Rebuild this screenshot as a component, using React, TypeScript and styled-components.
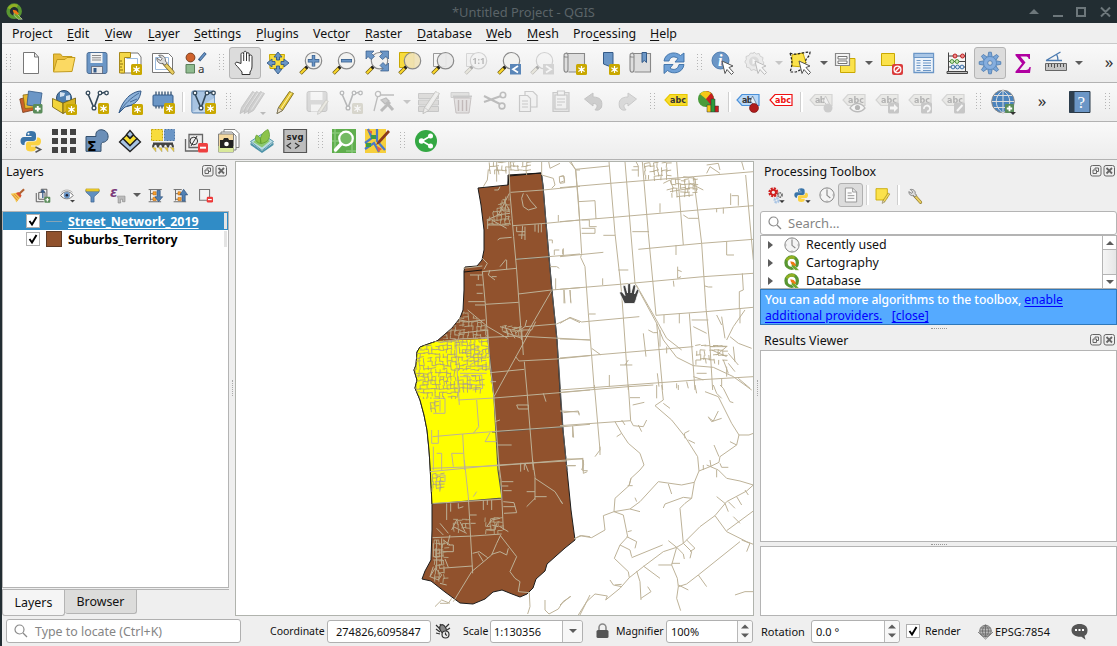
import React from "react";
import styled, { createGlobalStyle, css } from "styled-components";

const Global = createGlobalStyle`
  * { box-sizing: border-box; }
  html, body { margin: 0; padding: 0; overflow: hidden; }
  body { font-family: "Noto Sans", sans-serif; font-size: 12.4px; color: #111; background: #efefef; }
`;

/* ---------- window frame ---------- */
const Window = styled.div`
  width: 1117px; height: 646px; display: flex; flex-direction: column;
  background: #efefef; border-left: 2px solid #222d32;
`;
const TitleBar = styled.header`
  height: 23px; flex: none; background: #222d32; display: flex; align-items: center;
  justify-content: space-between; padding: 0 5px 0 4px;
`;
const TitleText = styled.span`
  color: #5b6468; font-size: 12.9px; margin-left: 429px; margin-right: auto; line-height: 23px; padding-top: 2px;
`;
const WinButtons = styled.svg`width: 86px; height: 22px; display: block;`;
const MenuBar = styled.nav`
  height: 21px; flex: none; display: flex; gap: 15px; padding-left: 10px; align-items: center;
  border-bottom: 1px solid #c9c9c9; line-height: 20px; white-space: nowrap; padding-top: 1px;
`;
const MenuItem = styled.span<{ $w: number }>`
  width: ${p => p.$w}px;
  u { text-underline-offset: 2px; text-decoration-thickness: 1px; }
`;

/* ---------- toolbars ---------- */
const ToolRow = styled.div<{ $h: number }>`
  height: ${p => p.$h}px; flex: none; display: flex; align-items: center;
  background: linear-gradient(#f9f9f9, #ededed); border-bottom: 1px solid #b2b2b2;
`;
const Grip = styled.i<{ $w?: number }>`
  width: ${p => p.$w ?? 16}px; height: 18px; flex: none; display: flex; justify-content: center;
  &::before {
    content: ""; width: 5px; height: 18px;
    background: radial-gradient(circle at 0.5px 0.5px, #b5b5b5 0.6px, transparent 0.9px) 0 0 / 4px 3px;
  }
`;
const Sep = styled.i<{ $w?: number }>`
  width: ${p => p.$w ?? 7}px; height: 20px; flex: none; display: flex; justify-content: center;
  &::before { content: ""; width: 2px; height: 100%; border-left: 1px solid #cfcfcf; background: #fff; }
`;
const Slot = styled.span<{ $on?: boolean; $off?: boolean }>`
  width: 33px; height: 32px; flex: none; padding: 4px;
  svg { display: block; overflow: visible; }
  ${p => p.$off && css`svg { opacity: 0.34; filter: grayscale(0.85); }`}
  ${p => p.$on && css`
    padding: 3px; background: #dcdcdc; border: 1px solid #b4b4b4; border-radius: 3px;
    width: 32px; margin-right: 1px;
  `}
`;
const Drop = styled.i<{ $w?: number; $off?: boolean }>`
  width: ${p => p.$w ?? 12}px; flex: none; display: flex; justify-content: center;
  &::before {
    content: ""; border: 4px solid transparent; border-bottom: 0;
    border-top: 4px solid ${p => (p.$off ? "#c6c6c6" : "#5c5c5c")};
  }
`;
const More = styled.span<{ $w: number }>`
  width: ${p => p.$w}px; flex: none; text-align: center; font-size: 17px; line-height: 20px; color: #333;
  padding-bottom: 3px;
`;

/* ---------- icon pieces, all on a 24 unit grid ---------- */
const Ico = ({ children, size = 24 }: { children: React.ReactNode; size?: number }) => (
  <svg width={size} height={size} viewBox="0 0 24 24" fill="none">{children}</svg>
);
const Star = ({ x = 13, y = 13 }: { x?: number; y?: number }) => (
  <g transform={`translate(${x} ${y})`}>
    <rect width="11" height="11" rx="1.5" fill="#c9a800" />
    <path d="M5.5 2v7M2.3 3.8l6.4 3.6M8.7 3.8L2.3 7.4" stroke="#fff" strokeWidth="1.2" />
    <circle cx="5.5" cy="5.6" r="1.7" fill="#fff" />
  </g>
);
const Plus = ({ x = 14, y = 14, s = 9.5 }: { x?: number; y?: number; s?: number }) => (
  <g transform={`translate(${x} ${y}) scale(${s / 10})`}>
    <rect width="10" height="10" rx="1.5" fill="#5a8c5a" stroke="none" />
    <path d="M5 2v6M2 5h6" stroke="#fff" strokeWidth="2" />
  </g>
);
const Lens = ({ fill = "#f2f2f0" }: { fill?: string }) => (
  <g>
    <path d="M8 16L1.5 22.5" stroke="#6b5a10" strokeWidth="3.6" />
    <path d="M6.5 17.5L1.8 22.2" stroke="#fbd72c" strokeWidth="2.2" />
    <path d="M9 15L6.8 17.2" stroke="#222" strokeWidth="3" />
    <circle cx="14.5" cy="9.7" r="8.2" fill={fill} fillOpacity=".9" stroke="#8a8a8a" strokeWidth="1.2" />
  </g>
);
const Page = () => <path d="M4.5 1.5h11l4 4.5v16.5h-15z M15.5 1.5v4.5h4" fill="#fff" stroke="#777" />;
const Pencil = ({ c = "#e6c835" }: { c?: string }) => (
  <g>
    <path d="M16.5 1.5l4 2-11 17-5.5 3 1.5-6z" fill={c} stroke="#7a6a1c" strokeWidth=".9" />
    <path d="M18.5 2.5L7.5 19.5" stroke="#fff3a8" strokeWidth="1" />
    <path d="M5.5 17.5l4 3-5.5 3z" fill="#f1e3c4" stroke="#555" strokeWidth=".6" />
  </g>
);
const GreyPencil = () => (
  <g>
    <path d="M16.5 1.5l4 2-11 17-5.5 3 1.5-6z" fill="#8c8c8c" stroke="#666" strokeWidth=".9" />
    <path d="M18.5 2.5L7.500 19.500" stroke="#ccc" strokeWidth="1" />
  </g>
);
const Wrench = () => (
  <g>
    <path d="M12 12l8.5 9.5" stroke="#7a651c" strokeWidth="4.4" strokeLinecap="round" />
    <path d="M12.5 12.5l8 9" stroke="#e8cd62" strokeWidth="3" strokeLinecap="round" />
    <path d="M6 3.5l3.5 3.5-1.5 2-4-2.5c0 4 3 6.5 6.5 5.5l2 2 2.5-2.5-2-2c.8-3.5-2.500-7-7-6z" fill="#dcdcdc" stroke="#555" strokeWidth=".9" />
  </g>
);
const Cursor = () => <path d="M11 10l11 5-4 1.5 4.5 5-2 2-4.5-5-2 4z" fill="#fff" stroke="#555" strokeWidth="1" />;
const Snake = ({ term = false }: { term?: boolean }) => (
  <g>
    <path d="M7 8V5.5C7 3 9 2 12 2s5 1 5 3.5V9c0 2-1 3-3 3H8.5C6 12 5.5 13.5 5.5 16H4.5C2.5 16 1.5 14 1.5 12s1-4 3.5-4h7.5V7H7z" fill="#3a74a8" />
    <path d="M18 8.5h1.5C21.5 8.5 22 11 22 12.5s-1 4-3 4h-7v1h5v2c0 2-2 3-5 3s-5-1-5-3V15.5c0-1.8 1-3 3-3h5c2 0 3-1 3-4z" fill="#fbd243" />
    <circle cx="9.5" cy="4.7" r="1" fill="#fff" />
    {term && <path d="M16.5 18l5 2.6-5 2.6" stroke="#555" strokeWidth="1.6" />}
  </g>
);
type LabelProps = { c?: string; bg?: string; t?: string; ink?: string };
const Label = ({ c = "#e8c800", bg = "#f8dc2c", t = "abc", ink = "#333" }: LabelProps) => (
  <g transform="translate(0 4)">
    <path d="M6 .5h17v11H6L1 6z" fill={bg} stroke={c} strokeWidth="1.2" />
    <text x="6" y="8.8" fontFamily="DejaVu Sans" fontWeight="700" fontSize="8" fill={ink} textLength={t.length * 5.3}>{t}</text>
  </g>
);
const GreyLabel = ({ t }: { t?: string }) => <Label c="#998" bg="#dcd6b0" t={t} />;
const Nodes = () => (
  <g stroke="#34495a" strokeWidth="1.3" fill="#fff">
    <path d="M3 4l6 14 5-14 7-2" fill="none" strokeWidth="1.6" />
    <circle cx="3" cy="3" r="1.8" /><circle cx="9" cy="18" r="1.9" /><circle cx="15" cy="3" r="1.8" /><circle cx="21.5" cy="3" r="1.8" />
  </g>
);
const Q = () => (
  <g>
    <circle cx="11.5" cy="11.5" r="8.5" fill="none" stroke="#589632" strokeWidth="5" />
    <path d="M4 8a8.5 8.5 0 0 1 12-3.5" stroke="#93b023" strokeWidth="4" />
    <path d="M12 12l11 11h-6l-6-6z" fill="#70a82c" stroke="#fff" strokeWidth=".6" />
    <path d="M9.5 9.500l5 1 4 5-3 1-5-3z" fill="#ee7913" />
  </g>
);
const ScrollMap = () => (
  <path d="M5 4.500c0-3.200-4.200-3-4 0 0 1 .8 1.500 2 1.500h2M5 4.500c0-1.500-.5-2.500-1.500-2.800M5 2.500h16.500v18.500H5.500M5 4.500v14c0 2-.7 2.700-2 2.700s-2-1-2-3.200V5" fill="#dedede" stroke="#888" strokeWidth="1.1" />
);
const arrow4 = "M12 1l4 5h-2.5v3h-3V6H8zM12 23l4-5h-2.5v-3h-3v3H8zM1 12l5-4v2.5h3v3H6V16zM23 12l-5-4v2.5h-3v3h3V16z";

const I: Record<string, React.ReactNode> = {
  file: <Page />,
  open: <g stroke="#c29b1c" strokeWidth="1"><path d="M1.5 20V3h7l2 2.5h9.5V9" fill="#e9bd3c" /><path d="M1.5 21L5 8.5h8l2-2h8L20 20.5z" fill="#fbd962" /></g>,
  save: <g><rect x="2" y="1.5" width="20" height="21" rx="2" fill="#6b96c6" stroke="#4d6f96" /><path d="M5.5 2h12v10h-12z" fill="#f4f4f4" /><path d="M7 4.5h9M7 6.8h9M7 9h9" stroke="#888" /><path d="M6.5 15.5h11v7h-11z" fill="#e8e8e8" stroke="#445" strokeWidth=".6" /><path d="M8.5 17h3v4.5h-3z" fill="#345a88" /></g>,
  layout: <g><path d="M8 2h12l3 4v16H3V7" fill="#fff" stroke="#777" /><path d="M8.5 7.5h11v12" stroke="#9cbce0" /><path d="M1.5 1.5h11v5h-6V22h-5z" fill="#f4d848" stroke="#a8891a" /><path d="M2 10h2M2 13h3M2 16h2M2 19h3" stroke="#8a7112" /><Star /></g>,
  manager: <g><path d="M1.5 2.5h16l4 4v15h-20z" fill="#fff" stroke="#777" /><path d="M4.5 6.5h13v12h-13z" stroke="#9cbce0" /><g transform="translate(2 1) scale(.95)"><Wrench /></g></g>,
  style: <g><circle cx="6.5" cy="6.5" r="4.4" fill="#d0622c" stroke="#7c4020" /><path d="M21.5 2L15 9.5" stroke="#345a88" strokeWidth="3" /><path d="M21 2.5L16 8.5" stroke="#6b96c6" strokeWidth="1.6" /><path d="M2 13.5h8.5V22H2z" fill="#8fbb8f" stroke="#5a7f5a" /><text x="14" y="21.5" fontFamily="Noto Sans" fontSize="11.5" fill="#333">a</text></g>,
  hand: <path d="M8 12.500V3.300c0-2 2.700-2 2.700 0V1.800c0-2 2.800-2 2.800 0V3c0-1.800 2.700-1.800 2.700 0v2c.4-1.600 2.800-1.300 2.800.5V15c0 3-1 4.500-2 6v2.500H9V21c-2.500-3-4-5-6.500-7.500-1-1.700 1-3 2.500-2z M10.700 3.500V10M13.500 3V10M16.200 4.500V10.500" fill="#fff" stroke="#333" strokeWidth="1" />,
  pan: <g><path d="M3.5 3.5h15l-1.5 14h-13z" fill="#f8dc3c" stroke="#c9a800" /><path d={arrow4} fill="#6b96c6" stroke="#345a88" strokeWidth=".9" /></g>,
  zin: <g><Lens /><path d="M14.5 4v11.5M8.8 9.7h11.5" stroke="#345a88" strokeWidth="3.4" /><path d="M14.5 4.6v10.3M9.4 9.7h10.3" stroke="#6b96c6" strokeWidth="2" /></g>,
  zout: <g><Lens /><path d="M9 9.7h11" stroke="#345a88" strokeWidth="3.4" /><path d="M9.6 9.7h9.8" stroke="#6b96c6" strokeWidth="2" /></g>,
  zfull: <g><Lens /><path d="M1 0h8L6.5 2.5l3 3-3.5 3-3-3L1 8zM23.5 0v8l-2.5-2.5-3.5 3-3-3 3-3L15 0zM23.5 20h-8l2.5-2.5-3-3 3-3 3 3 2.5-2.5z" fill="#6b96c6" stroke="#345a88" strokeWidth=".7" /></g>,
  zsel: <g><path d="M1.5 1.5H16v15H1.5z" fill="#f8dc3c" stroke="#c9a800" /><Lens fill="#efe2b8" /></g>,
  zlayer: <g><path d="M2.5 2.5H15v13H2.5z" fill="#f5f5f5" stroke="#999" /><Lens fill="#e9e9e9" /></g>,
  znative: <g><path d="M2.5 2.5H15v13H2.5z" fill="#eee" stroke="#999" /><Lens /><text x="8.3" y="13" fontFamily="Noto Sans" fontWeight="700" fontSize="9" fill="#444">1:1</text></g>,
  zlast: <g><Lens /><path d="M13 13h11v10.5H13z" fill="#5a86b8" /><path d="M21 15l-5 3.3 5 3.3" stroke="#fff" strokeWidth="1.8" /></g>,
  znext: <g><Lens /><path d="M13 13h11v10.5H13z" fill="#9a9a9a" /><path d="M16 15l5 3.3-5 3.3" stroke="#fff" strokeWidth="1.8" /></g>,
  newmap: <g><ScrollMap /><Star /></g>,
  bookadd: <g><path d="M7.5 1.5h9.5v17.5l-4.5-4-5-2z" fill="#6b96c6" stroke="#345a88" /><Star /></g>,
  bookmarks: <g><ScrollMap /><path d="M13 1.5h4.500v10l-2.200-2-2.300 2z" fill="#6b96c6" stroke="#345a88" /></g>,
  refresh: <g fill="#6ea0d6" stroke="#3b6ea5" strokeWidth=".9"><path d="M2 10C3 2 13-.5 18.5 4.5L22 2v9h-9l3-3.500C12 4.500 8 6 7 10z" /><path d="M22 13.500c-1 8.500-11 10.500-16.500 6L2 22.500v-9h9l-3 3.500c4 3 8 1 9-3.500z" /></g>,
  info: <g><circle cx="9.5" cy="9.5" r="8.5" fill="#6b96c6" stroke="#4d7cb0" /><text x="7" y="15" fontFamily="Liberation Serif" fontStyle="italic" fontWeight="700" fontSize="16" fill="#fff">i</text><Cursor /></g>,
  action: <g><path d="M10 1l2.200 2 3-.5 1 2.800 2.800 1.200-.5 3 1.500 2.500-2 2.300-.5 3-3 .5-2 2-2.600-1.300L7 19.500l-1.500-2.600-3-.7v-3L.8 11l1.500-2.600L2 5.500l3-1L6.500 2l3 .4z" fill="#ddd" stroke="#888" /><circle cx="10" cy="10.500" r="5" fill="#aaa" /><path d="M8.500 7.500l4.500 3-4.500 3z" fill="#fff" /><Cursor /></g>,
  select: <g><path d="M4 4l11-2 3 10-3 4-11-1z" fill="#fbe24b" stroke="#c9a800" /><path d="M2 2c6 3 12-1 20-1 0 6-6 6-4 11M2 2c2 7 3 11 0 19h6l6-3" stroke="#222" strokeWidth="1.2" strokeDasharray="2.5 1.5" /><Cursor /></g>,
  form: <g><path d="M9.5 9.5V7.500H21v14H6.500V15" fill="#fbe24b" stroke="#c9a800" /><path d="M1.500 2.500h14v12h-14z" fill="#f4f4f4" stroke="#888" strokeWidth="1.2" /><path d="M4 5.500h9v2.500H4zM4 10h9v2.500H4z" stroke="#666" strokeWidth=".9" fill="#fff" /></g>,
  deselect: <g><path d="M2.5 2.500h13v12h-13z" fill="#fbe24b" stroke="#c9a800" /><rect x="13" y="13" width="11" height="11" rx="2" fill="#da3b3b" /><circle cx="18.500" cy="18.500" r="3.400" stroke="#fff" strokeWidth="1.300" /><path d="M16.300 20.700l4.400-4.400" stroke="#fff" strokeWidth="1.300" /></g>,
  table: <g><path d="M2 2.500h19.500v19H2z" fill="#edf3fa" stroke="#6b96c6" strokeWidth="1.300" /><path d="M2 2.500h19.500v4H2z" fill="#a9c6e6" stroke="#6b96c6" /><path d="M4.500 9.500h4M4.500 12h4M4.500 14.500h4M4.500 17h4M11 9.500h8M11 12h8M11 14.500h8M11 17h8M4.500 19.500h4M11 19.500h8" stroke="#6b96c6" strokeWidth="1.100" /></g>,
  abacus: <g stroke="#444"><path d="M3.500 1.500V20M20.500 1.500V20M3.500 5h17M3.500 10.500h17M3.500 16h17" /><path d="M2 20.500h20.500v2H2z" fill="#bbb" /><g fill="#e88" stroke="#b22"><circle cx="10" cy="5" r="2" /><circle cx="17.500" cy="5" r="2" /></g><g fill="#ccecb8" stroke="#4a8f3a"><circle cx="7" cy="10.500" r="1.900" /><circle cx="12" cy="10.500" r="1.900" /></g><g fill="#dceafa" stroke="#3b6ea5"><circle cx="8" cy="16" r="1.900" /><circle cx="12.500" cy="16" r="1.900" /><circle cx="17" cy="16" r="1.900" /></g></g>,
  gear: <g>{[0, 45, 90, 135].map(a => <g key={a} transform={`rotate(${a} 12 12)`}><path d="M10.700 1.200h2.600l1 5.500h-4.600zM10.700 22.800h2.600l1-5.500h-4.600z" fill="#7aa6d8" stroke="#4a7ab0" strokeWidth=".8" /></g>)}<circle cx="12" cy="12" r="6.500" fill="#86aede" stroke="#4a7ab0" strokeWidth=".6" /><circle cx="12" cy="12" r="2.300" fill="#dcdcdc" stroke="#4a7ab0" strokeWidth=".8" /></g>,
  sigma: <path d="M4.500 3H19v5h-1.300c-.3-2-1.500-2.500-3.500-2.500H9.500l5 6-6 7.500H15c2 0 3-1 3.500-3h1.300L19 22H4.500v-1.500l6.500-8L4.500 4.500z" fill="#b000a0" />,
  measure: <g><path d="M2 9.500h16M2 9.500L16.500 1M12.500 3c1 2 1.500 3 1.500 6.500" stroke="#4a7ab0" strokeWidth="1.300" /><path d="M1.500 12.500h21v7h-21z" fill="#c4c4c4" stroke="#666" /><path d="M4.500 13v3M7.500 13v3M10.500 13v4M13.500 13v3M16.500 13v3M19.500 13v3" stroke="#444" strokeWidth=".9" /></g>,

  dsm: <g><path d="M.8 9l11-3 3 14-11 2.500z" fill="#c8602c" stroke="#7a3a18" strokeWidth=".8" /><path d="M4 5l12-1.500 1 14-11 1z" fill="#e8b830" stroke="#8a6a12" strokeWidth=".8" /><path d="M9.500 1L23 3l-2 14-13-2z" fill="#6b96c6" stroke="#345a88" strokeWidth=".8" /><Plus /></g>,
  geopkg: <g><circle cx="12" cy="8" r="7.500" fill="#4f7fb0" stroke="#2b4c70" /><path d="M8 2l5 1-1 3-4 1zM14 6l4-1v5h-4z" fill="#d4e2f0" /><path d="M.5 8.500L11 13v10.500L.5 17z" fill="#f2d43a" stroke="#6b5a10" strokeWidth=".8" /><path d="M11 13l12.500-5v9L11 23.500z" fill="#d8b420" stroke="#6b5a10" strokeWidth=".8" /><Star x={14} y={14} /></g>,
  shape: <g><Nodes /><Star /></g>,
  feather: <g><path d="M1 23c2-8 6-13 10-17 4-3 8-5 12-5-1 8-5 14-16 16z" fill="#8db2da" stroke="#345a88" /><path d="M1 23C6 14 13 8 21 3M9 16l6-1M12 12l7-3" stroke="#345a88" strokeWidth=".8" /><Star x={14} y={14} /></g>,
  chip: <g><path d="M5 1.500v17M8 1.500v17M11 1.500v17M14 1.500v17M17 1.500v17M20 1.500v17" stroke="#34506e" strokeWidth="1.300" /><rect x="2" y="5" width="20" height="11" rx="1" fill="#6b96c6" stroke="#345a88" /><Star /></g>,
  virtual: <g><rect x=".8" y="1" width="22.500" height="22" rx="1.500" fill="#a8c4e2" stroke="#5f86b2" /><path d="M1.500 22L23 8v14z" fill="#c4d8ec" /><g transform="translate(1 0)"><Nodes /></g><Star x={14} y={13} /></g>,
  pens: <g><g transform="translate(-4 0)"><GreyPencil /></g><g><GreyPencil /></g><g transform="translate(4 0)"><GreyPencil /></g><path d="M20 22h6l-3 3z" fill="#555" /></g>,
  pen: <Pencil />,
  saveedit: <g><rect x="1" y="1.500" width="20" height="20" rx="2" fill="#aaa" stroke="#777" /><path d="M4.500 2h12v8h-12zM5 14.500h10v7H5z" fill="#f6f6f6" /><g transform="translate(9 9) scale(.65)"><Pencil /></g></g>,
  addfeat: <g><Nodes /><Star /></g>,
  vertex: <g stroke="#555" strokeWidth="1.300"><path d="M6 5L2 21M6 5h16" /><circle cx="6" cy="4" r="2.600" fill="#fff" /><path d="M9 21l9-9M13 11l8 9" strokeWidth="3" /><path d="M9 10l5-2 3 3-4 3z" fill="#888" /></g>,
  editattr: <g><path d="M1.500 3.500h20v5h-20zM1.500 10h20v5h-20zM1.500 16.500h20v5h-20z" fill="#b8b090" stroke="#777" /><g transform="translate(2 0)"><Pencil c="#ddd" /></g></g>,
  trash: <g><path d="M1 2.500h18v5H1z" fill="#bba" stroke="#888" /><path d="M4 8h17l-2 15H6z" fill="#e4bcbc" stroke="#a55" /><path d="M8.500 10v11M12.500 10v11M16.500 10v11" stroke="#c33" strokeWidth="1.400" /><path d="M3 6.500h19" stroke="#777" strokeWidth="2" /></g>,
  cut: <g stroke="#555" strokeWidth="1.600"><path d="M1 6l16 8M1 12l17-6" strokeWidth="2" /><circle cx="20" cy="5" r="2.700" /><circle cx="19" cy="16" r="2.900" /></g>,
  copy: <g fill="#eee" stroke="#777" strokeWidth="1.200"><path d="M9 1.500h8l4 4V17H9z" /><path d="M3.500 5.500h8l3 3v13h-11z" /><path d="M6 11h6M6 14h6M6 17h6" /></g>,
  paste: <g fill="#eee" stroke="#777" strokeWidth="1.200"><path d="M4 2.500h16v19H4z" fill="#ccc" /><path d="M6 5h12v14H6z" /><path d="M8.500 1h7v4h-7z" /><path d="M8 9h8M8 12h8M8 15h5" /></g>,
  undo: <path d="M2.500 9L11 3v4c7 0 10 3.500 8.500 10-1.500 3.500-4.500 3.500-6.500 2.800 3-3 3-6.300-2-6.300V16z" fill="#888" stroke="#666" />,
  redo: <path d="M21.500 9L13 3v4c-7 0-10 3.500-8.500 10 1.500 3.500 4.500 3.500 6.500 2.800-3-3-3-6.300 2-6.300V16z" fill="#aaa" stroke="#777" />,
  label: <Label />,
  diagram: <g><circle cx="9" cy="9" r="8" fill="#4a9b3a" /><path d="M9 9V1a8 8 0 0 1 5 14z" fill="#c81e1e" /><path d="M9 9L3 4a8 8 0 0 1 11-1z" fill="#f5c816" /><path d="M10 15h4v7h-4z" fill="#f5c816" stroke="#333" strokeWidth=".5" /><path d="M14 9h4v13h-4z" fill="#2b9b3a" stroke="#333" strokeWidth=".5" /><path d="M18 16h3.500v6H18z" fill="#c81e1e" stroke="#333" strokeWidth=".5" /></g>,
  pinlab: <g><Label c="#4a90d9" bg="#b8d8f8" t="ab" /><path d="M16.500 6l4 8-2 2-4-5z" fill="#e8f0f8" stroke="#567" strokeWidth=".7" /><circle cx="18" cy="18" r="4.500" fill="#b01c1c" stroke="#701010" strokeWidth=".6" /></g>,
  redlab: <Label c="#ee1111" bg="#fff" ink="#ee1111" />,
  l1: <g><GreyLabel t="ab" /><path d="M16.500 6l4 8-2 2-4-5z" fill="#eee" stroke="#777" /><circle cx="19" cy="18" r="4.500" fill="#888" /></g>,
  l2: <g><GreyLabel /><path d="M8 18c4-6 11-6 15 0-4 5-11 5-15 0z" fill="#fff" stroke="#555" strokeWidth="1.300" /><circle cx="15.500" cy="17.500" r="2.600" fill="#444" /></g>,
  l3: <g><GreyLabel /><rect x="13" y="12.500" width="11" height="11" rx="1.500" fill="#777" /><path d="M15 16.500h4V14l4 4-4 4v-2.500h-4z" fill="#fff" /></g>,
  l4: <g><GreyLabel /><rect x="13" y="12.500" width="11" height="11" rx="1.500" fill="#777" /><path d="M16 19a3 3 0 1 1 3 2.500" stroke="#fff" strokeWidth="1.800" /></g>,
  l5: <g><GreyLabel /><rect x="13" y="12.500" width="11" height="11" rx="1.500" fill="#777" /><path d="M16 21l5.500-6" stroke="#fff" strokeWidth="2" /></g>,
  globe: <g><circle cx="12" cy="11.500" r="11.300" fill="#4a83bd" stroke="#888" /><path d="M12 0v23M1 11.500h22M3 5.500h18M3 17.500h18M12 .5C3 6 3 17 12 23M12 .5C21 6 21 17 12 23" stroke="#ddd" strokeWidth="1" /><Plus x={14} y={14} s={9} /><path d="M19 22h6l-3 3z" fill="#333" /></g>,
  help: <g><path d="M1.500 1.500h20.500v21H1.500z" fill="#6b96c6" stroke="#2b3a48" /><path d="M1.500 1.500h5v21h-5z" fill="#2f4050" /><text x="9.500" y="17.500" fontFamily="Liberation Serif" fontSize="17" fill="#fff">?</text></g>,

  python: <Snake term />,
  grid: <g fill="#444">{[0, 9, 18].map(y => [0, 9, 18].map(x => <rect key={x + "-" + y} x={x} y={y} width="6" height="6" />))}</g>,
  sigblob: <g><path d="M1 7.500h10C10 2 14 .5 17 .8c8 1 8 12 1 12.500-2 .2-2 2-2 9H1z" fill="#6b8fb8" stroke="#34506e" /><text x="2" y="22" fontFamily="DejaVu Sans" fontWeight="700" fontSize="14" fill="#000">Σ</text></g>,
  diamonds: <g strokeWidth="1.300" stroke="#222"><path d="M1.500 13L12 22.500 22.500 13 19 9.500l-7 7-7-7z" fill="#a8c4e4" /><path d="M5 9.500l7 7 7-7L15.500 6 12 9.500 8.500 6z" fill="#f8e030" /><path d="M12 1.500L8.500 5.500 12 9l3.500-3.500z" fill="#a8c4e4" /></g>,
  blocks: <g><path d="M.5.5h11v11H.5z" fill="#f8dc3c" stroke="#c9a800" strokeDasharray="2 1" /><path d="M13.500.5h10v11h-10z" fill="#6b96c6" stroke="#4a76a8" strokeDasharray="2 1" /><path d="M2 18.500c0-5 5-5 5 0 0-5 5-5 5 0 0-5 5-5 5 0 0-5 5-5 5 0M2 14.500h20" stroke="#444" strokeWidth="2" /><path d="M1 18l4 5v-4zM7 18l4 5v-4zM13 18l4 5v-4zM19 18l4 5v-4z" fill="#f0cc30" stroke="#998" strokeWidth=".4" /></g>,
  nulls: <g><path d="M1.500 10v12H14M5 5.500h13.500v13H5z" fill="#eee" stroke="#666" strokeWidth="1.300" /><circle cx="9.800" cy="12" r="3.800" stroke="#333" /><path d="M7 17l6-10" stroke="#333" /><rect x="14" y="14" width="10" height="9.500" rx="1.500" fill="#ee4040" /><path d="M16 18.700h6" stroke="#fff" strokeWidth="2" /></g>,
  photos: <g stroke="#777" strokeWidth=".9"><path d="M7 .5h11l4 4v14H7z" fill="#fff" /><path d="M4 3h11l4 4v14H4z" fill="#f6f6f6" /><path d="M1.500 5h15v18h-15z" fill="#f4d8a0" /><path d="M1.500 17h15v6h-15z" fill="#d8e89a" stroke="none" /><path d="M3 11h3l1-2h4l1 2h4v8H3z" fill="#222" stroke="none" /><circle cx="9.500" cy="15" r="2.300" fill="#fff" stroke="none" /></g>,
  leaf: <g><path d="M.5 13.500L12 22l11.500-8.500v2.500L12 24 .5 16z" fill="#4d93a8" /><path d="M.5 12.500L12 5l11.500 7.500L12 21.500z" fill="#b8dce4" stroke="#5a98aa" /><path d="M3 13l9-6 8 5-8 6.500z" fill="#8cc870" /><path d="M10.500 14.500C4 13 5 8 6.500 6c3.500 1.500 5 5 4 8.500zM11 14.500c-2-7 2-12 7-14 3.500 7 1 13-7 14z" fill="#8cc34a" stroke="#5a9a2a" strokeWidth=".7" /></g>,
  svg: <g><path d="M.8.5h22.700v23H.8z" fill="#bdbdbd" stroke="#555" strokeWidth="1.200" /><text x="3.500" y="10.500" fontFamily="DejaVu Sans" fontWeight="700" fontSize="8.500" fill="#222" textLength="17">svg</text><path d="M8 14l-4 2.800 4 2.800M12 14l4 2.800-4 2.800" stroke="#333" strokeWidth="1.200" /></g>,
  qms: <g><path d="M0 0h24v24H0z" fill="#5fae4d" /><path d="M0 4h9M0 12h6M3 0v24M14 22h10M20 14v10" stroke="#86c878" strokeWidth="1.500" /><path d="M9 15L3.500 21" stroke="#fff" strokeWidth="3.400" strokeLinecap="round" /><circle cx="14" cy="9.500" r="6.800" stroke="#fff" strokeWidth="2.200" fill="#74ba64" /></g>,
  osm: <g><path d="M0 0h21v24H0z" fill="#f6cf3c" /><path d="M3 0l4 9-7 5M12 0v12l8 9M0 20l9-6 5 9" stroke="#4a78c8" strokeWidth="2.200" /><path d="M6 6h5v4H6zM1 14h5v4H1z" fill="#3c9c48" /><path d="M2 1l5 1v3zM12 17l5 3-4 3z" fill="#e0604a" /><path d="M23 1L13 12l-2 4 4-2L25 3z" fill="#8a3a1c" /></g>,
  share: <g><circle cx="12" cy="12" r="11" fill="#34a843" /><path d="M16.500 7L8 12l8.500 5" stroke="#fff" strokeWidth="1.700" /><g fill="#fff"><circle cx="16.500" cy="7" r="2.500" /><circle cx="7.500" cy="12" r="2.700" /><circle cx="16.500" cy="17" r="2.500" /></g></g>,

  brush: <g><path d="M22.500 2l-8 7.500" stroke="#b06030" strokeWidth="3.500" /><path d="M1 9l11-2 6 6-8 10c-1-5-5-9-9-14z" fill="#f3c850" /><path d="M9.500 8.500l4-2 5 5-2 4z" fill="#d85030" /><path d="M4 11l8 9M7 10l7 7" stroke="#e08838" strokeWidth="1.600" /></g>,
  addgroup: <g stroke="#555" strokeWidth="1.500" fill="#eee"><path d="M2 8v14h12" fill="none" /><path d="M6 7h10v11H6z" /><path d="M10 7V2h9v14" fill="none" /><path d="M12.500 16V4M9.500 7l3-3.500 3 3.500" stroke="#345a88" strokeWidth="2" fill="none" /><Plus x={15} y={14} /></g>,
  eye: <g><path d="M1 12C6 4 16 4 21 12c-5 7-15 7-20 0z" fill="#fff" stroke="#777" strokeWidth="1.600" /><circle cx="11" cy="11.500" r="5" fill="#6b96c6" /><circle cx="11" cy="11.500" r="2" fill="#223" /><path d="M2 7c5-5 13-5 18 0" stroke="#888" /><path d="M16 19h8l-4 4z" fill="#444" /></g>,
  filter: <g><path d="M1.500 3h21v3.500L14.500 14v8.500h-5V14l-8-7.500z" fill="#5f8fc0" stroke="#345a88" /><path d="M1.500 1.500h21v3.500h-21z" fill="#f8d830" stroke="#b89810" /></g>,
  expr: <g><text x="0" y="14" fontFamily="DejaVu Sans" fontStyle="italic" fontWeight="700" fontSize="22" fill="#7a3a7a">ε</text><path d="M12 13h12v9h-4v-4h-3v6h-4v-7z" fill="#bbb" stroke="#888" /></g>,
  expand: <g><path d="M1 2.500h21M4 3v17M4 9h4M4 18h4M1 22h20" stroke="#666" strokeWidth="1.500" /><path d="M8 6h5v5H8zM8 15h5v5H8z" fill="#f8a030" stroke="#c87010" /><path d="M14.500 4h5v10h4L17 22l-6-8h3.500z" fill="#5080b4" stroke="#2c4c74" /></g>,
  collapse: <g><path d="M1 2.500h13M4 3v17M4 9h4M4 18h4M1 22h20" stroke="#666" strokeWidth="1.500" /><path d="M8 6h4v5H8zM8 15h5v5H8z" fill="#f8a030" stroke="#c87010" /><path d="M14.500 21h5V11h4L17 2l-6 9h3.500z" fill="#5080b4" stroke="#2c4c74" /></g>,
  remove: <g><path d="M2.500 2.500h16v17h-16z" stroke="#777" strokeWidth="1.700" fill="#f2f2f2" /><rect x="14" y="14" width="10" height="9" rx="2" fill="#ee3838" /><path d="M16 18.500h6" stroke="#fff" strokeWidth="2" /></g>,

  gears: <g><circle cx="8" cy="8" r="5.500" stroke="#d02020" strokeWidth="4" strokeDasharray="3 1.300" /><circle cx="8" cy="8" r="3.800" stroke="#d02020" strokeWidth="2.500" /><circle cx="18" cy="12" r="3" stroke="#777" strokeWidth="3" strokeDasharray="2 1" /><circle cx="13" cy="20" r="3" stroke="#a8c4e4" strokeWidth="3.500" strokeDasharray="3 1" /><path d="M17 20h8l-4 4z" fill="#333" /></g>,
  pysmall: <g><g transform="translate(-1 0)"><Snake /></g><path d="M17 20h8l-4 4z" fill="#333" /></g>,
  clock: <g stroke="#888"><circle cx="12" cy="12" r="10.700" fill="#f4f4f4" strokeWidth="1.500" /><path d="M12 4v8.500l5 4" strokeWidth="1.700" /><path d="M12 2v2M12 20v2M2 12h2M20 12h2" /></g>,
  doc: <g stroke="#999" strokeWidth="1.500"><path d="M3.500 1.500h11l6 6v15h-17z" fill="#fafafa" /><path d="M14.500 1.500v6h6M7 9h6M7 13h10M7 17h10" /></g>,
  note: <g><path d="M1.500 2.500h17v14l-5 3h-12z" fill="#fbe24b" stroke="#c9a800" strokeWidth="1.300" /><g transform="translate(8 8) scale(.7)"><Pencil /></g></g>,
  wrench: <Wrench />,
};
const T = ({ n, on, off }: { n: string; on?: boolean; off?: boolean }) => (
  <Slot $on={on} $off={off}><Ico>{I[n]}</Ico></Slot>
);

/* ---------- docks ---------- */
const Main = styled.main`height: 456px; flex: none; display: flex;`;
const LeftDock = styled.section`width: 227px; display: flex; flex-direction: column;`;
const RightDock = styled.section`width: 357px; display: flex; flex-direction: column;`;
const Splitter = styled.div<{ $w: number }>`
  width: ${p => p.$w}px; flex: none; display: flex; align-items: center; justify-content: center;
  &::before { content: ""; height: 16px; border-left: 1px dotted #aaa; }
`;
const HSplit = styled.div<{ $h: number }>`
  height: ${p => p.$h}px; flex: none; display: flex; justify-content: center; align-items: center;
  &::before { content: ""; width: 16px; border-top: 1px dotted #999; }
`;
const DockTitle = styled.h2<{ $h?: number }>`
  height: ${p => p.$h ?? 22}px; margin: 0; flex: none; font-size: 12.4px; font-weight: 400;
  display: flex; align-items: center; justify-content: space-between; padding: 0 2px 0 4px;
`;
const DockButtons = styled.svg`width: 25px; height: 12px; margin-top: -1px;`;
const SmallBar = styled.div<{ $pad: number }>`
  height: 29px; flex: none; display: flex; align-items: center; padding: 0 0 3px ${p => p.$pad}px;
`;
const SmallBtn = styled.span<{ $w: number; $on?: boolean }>`
  width: ${p => p.$w}px; height: 24px; display: flex; align-items: center; justify-content: center; flex: none;
  svg { overflow: visible; }
  ${p => p.$on && css`background: #dcdcdc; border: 1px solid #b0b0b0; border-radius: 3px;`}
`;
const Tree = styled.div<{ $h: number }>`
  height: ${p => p.$h}px; flex: none; background: #fff; border: 1px solid #b4b4b4; overflow: hidden;
`;
const LayerRow = styled.div<{ $sel?: boolean }>`
  height: 18px; display: flex; align-items: center; padding-left: 23px; font-weight: 700; font-size: 12.4px;
  color: ${p => (p.$sel ? "#fff" : "#000")};
  background: ${p => (p.$sel ? "#308cc6" : "#fff")};
  text-decoration: ${p => (p.$sel ? "underline" : "none")};
  text-decoration-thickness: 1px; text-underline-offset: 2px;
  border-right: 1px solid ${p => (p.$sel ? "#308cc6" : "#fff")};
`;
const RowEnd = styled.i`margin-left: auto; width: 3px; height: 16px; background: #e4e4e4;`;
const Check = styled.span`
  width: 14px; height: 14px; background: #fff; border: 1px solid #b0b0b0; flex: none; display: flex;
`;
const CheckBox = () => <Check><svg width="12" height="12" viewBox="0 0 12 12"><path d="M2.5 6l2.5 3.5L9.5 2" fill="none" stroke="#000" strokeWidth="1.9" /></svg></Check>;
const LineSym = styled.i`width: 16px; height: 1px; background: #87a4b5; margin: 0 6px;`;
const FillSym = styled.i`width: 16px; height: 16px; background: #91522d; border: 1px solid #5c3823; margin: 0 6px;`;
const Tabs = styled.div`display: flex; align-items: flex-start; height: 28px; border-top: 1px solid #b4b4b4; margin-top: 1px;`;
const Tab = styled.span<{ $w: number; $active?: boolean }>`
  width: ${p => p.$w}px; height: ${p => (p.$active ? 26 : 24)}px; text-align: center;
  line-height: ${p => (p.$active ? 26 : 23)}px; border: 1px solid #b4b4b4; border-top: 0;
  background: ${p => (p.$active ? "#f5f5f5" : "#dcdcdb")}; border-radius: 0 0 3px 3px;
  border-left-width: ${p => (p.$active ? 1 : 0)}px;
`;
const Canvas = styled.div`
  width: 519px; height: 455px; margin-top: 1px; flex: none; border: 1px solid #b0b3ad; background: #fff; overflow: hidden;
  svg { display: block; }
`;
const Search = styled.div`
  height: 24px; flex: none; border: 1px solid #b4b4b4; border-radius: 3px; background: #fff; color: #858585;
  display: flex; align-items: center; gap: 6px; padding-left: 7px; line-height: 22px; font-size: 13px;
`;
const AlgTree = styled.div`height: 54px; flex: none; display: flex; background: #fff; border: 1px solid #b4b4b4; overflow: hidden;`;
const AlgRows = styled.div`flex: 1;`;
const AlgRow = styled.div`
  height: 18px; display: flex; align-items: center; line-height: 18px; padding-left: 7px;
  &::before { content: ""; border: 4px solid transparent; border-left: 5px solid #5c5c5c; border-right: 0; margin-right: 11px; }
  svg { margin-right: 6px; }
`;
const ScrollBar = styled.div`
  width: 14px; border-left: 1px solid #b4b4b4; display: flex; flex-direction: column; justify-content: space-between;
  background: linear-gradient(90deg, #f5f5f5, #e6e6e6);
`;
const ScrollEnd = styled.i<{ $down?: boolean }>`
  height: 14px; display: flex; align-items: center; justify-content: center; background: #fff;
  border-bottom: ${p => (p.$down ? 0 : 1)}px solid #b4b4b4; border-top: ${p => (p.$down ? 1 : 0)}px solid #b4b4b4;
  &::before { content: ""; border: 4px solid transparent; border-bottom: 4px solid #5c5c5c; border-top: 0; transform: ${p => (p.$down ? "rotate(180deg)" : "none")}; }
`;
const Notice = styled.p`
  margin: 0; height: 36px; flex: none; background: #55aaff; border: 1px solid #2f78ba; color: #fff;
  padding: 2px 4px; line-height: 16px; font-size: 12.15px; font-weight: 500; letter-spacing: -0.06px; white-space: nowrap;
  a { color: #0000ff; text-decoration: underline; text-underline-offset: 2px; font-weight: 400; letter-spacing: 0; }
`;
const Panel = styled.div<{ $h: number }>`height: ${p => p.$h}px; flex: none; background: #fff; border: 1px solid #b4b4b4;`;

/* ---------- status bar ---------- */
const Status = styled.footer`
  height: 30px; flex: none; display: flex; align-items: center; font-size: 11px; padding: 0 4px; white-space: nowrap;
`;
const Field = styled.span<{ $w: number; $ml?: number; $pl?: number }>`
  width: ${p => p.$w}px; height: 23px; margin-left: ${p => p.$ml ?? 0}px; padding-left: ${p => p.$pl ?? 4}px;
  background: #fff; border: 1px solid #b0b0b0; border-radius: 3px; display: flex; align-items: center;
  justify-content: space-between; flex: none;
`;
const Locator = styled(Field)`font-size: 12.4px; color: #858585; justify-content: flex-start; gap: 7px; height: 24px;`;
const Arrows = styled.i<{ $w: number }>`
  width: ${p => p.$w}px; height: 21px; border-left: 1px solid #b8b8b8; background: #f7f7f7; border-radius: 0 3px 3px 0;
  display: flex; align-items: center; justify-content: center;
`;
const Lab = styled.span<{ $w: number; $ml: number; $wide?: boolean }>`
  width: ${p => p.$w}px; margin-left: ${p => p.$ml}px; flex: none; font-size: ${p => (p.$wide ? 11 : 10.5)}px;
`;
const StatIcon = styled.svg<{ $ml: number }>`margin-left: ${p => p.$ml}px; flex: none; overflow: visible;`;
const Spin = () => <Arrows $w={15}><svg width="10" height="16" viewBox="0 0 10 16"><path d="M1 5.500L5 1.500l4 4zM1 10.500h8l-4 4z" fill="#5c5c5c" /></svg></Arrows>;
const Glass = () => <svg width="14" height="14" viewBox="0 0 14 14" fill="none" stroke="#8a8a8a" strokeWidth="1.2"><circle cx="5.5" cy="5.5" r="4.5" /><path d="M9 9l4 4" /></svg>;

const DockHead = ({ title, h }: { title: string; h?: number }) => (
  <DockTitle $h={h}>
    <span>{title}</span>
    <DockButtons viewBox="0 0 25 12" fill="none" stroke="#666">
      <rect x=".5" y=".5" width="10.500" height="10.500" rx="2" /><path d="M3 5h3.500v3.500H3zM5 4.500V3h3.500v3.500H7" />
      <rect x="14" y=".5" width="10.500" height="10.500" rx="2" /><path d="M16.500 3l5.500 5.500M22 3l-5.500 5.500" strokeWidth="1.800" />
    </DockButtons>
  </DockTitle>
);

/* ---------- map drawing ---------- */
/* Deterministic block pattern used for dense suburban streets. */
function blocks(x0: number, y0: number, w: number, h: number, step: number, seed: number) {
  let s = seed;
  const rnd = () => ((s = (s * 16807) % 2147483647) / 2147483647);
  let d = "";
  for (let y = y0; y < y0 + h; y += step)
    for (let x = x0; x < x0 + w; x += step) {
      const jx = x + (rnd() - 0.5) * 1.6, jy = y + (rnd() - 0.5) * 1.6, r = rnd();
      if (r < 0.72) d += `M${jx.toFixed(1)} ${jy.toFixed(1)}l${(step * 1.2).toFixed(1)} ${(rnd() * 1.6 - 1).toFixed(1)}`;
      if (r > 0.3) d += `M${jx.toFixed(1)} ${jy.toFixed(1)}l${(rnd() * 1.4 - 0.5).toFixed(1)} ${(step * 1.1).toFixed(1)}`;
    }
  return d;
}
const coast = "478,188 481,205 484,230 484,250 482,260 477,266 465,267 464,271 464,290 463,310 460,318 452,328 437,341";
const coastLow = "437,341 431,343 420,347 417,352 416,365 414,370 417,380 415,388 420,400 424,415 427,430 429,450 430,465 431,485 432,504";
const south = "432,530 431,560 425,571 422,579 431,581 445,592 460,603 473,604 485,599 493,592 502,590 512,594 520,597 527,594 533,588 536,579 545,571 547,564 556,556 565,548 575,540";
const territory = `508,185 508,175 541,173 543,185 546,223 549,257 552,291 557,340 560,392 563,430 567,470 571,510 575,540 ${south.split(" ").reverse().slice(1).join(" ")} ${coastLow.split(" ").reverse().join(" ")} ${coast.split(" ").reverse().slice(1).join(" ")}`;
const sub = `${coastLow} 502,498 499,470 494,400 490,370 488,339`;

const roadsNW = `M265 28L262 60 250 80M290 5v60M326 0L330 100 341 230 350 330 365 540M332 97L430 90 540 79M338 197L437 190 540 180M347 298L446 290 540 282M355 402L455 390 540 383M256 433L356 427M376 500L470 492 510 474 540 488M247 335L350 325M190 325L247 318M247 333L256 433 263 540M335 232L300 235 293 240M370 100l-5 15 5 25 15 10 25-7-18-20-12-20M283 90h12l5-10M425 5v40l35 10 5 20-10 10M445 0l5 25 30-15M510 0l17 30 13 0M527 30l12 150M478 50l12-3 4 15-15 6zM350 200v15h25M368 197l-3 40M375 200v40M355 225h20M405 193v22M415 193v25M424 192v25M475 165v20M445 240h12v10M463 285v-15h15M488 283v-15M450 320h20l8 5M467 355v35M492 390l3 40M510 390l3 40M455 392L375 530M260 180l35-15 33-65M263 182v25M262 195h65M300 140l12 15M290 165l40-5M275 180l45 25M312 120l15 30M305 150h25M270 330l-5 15 20 15M275 350h15M247 295l15 15-10 18M300 320l18-22M320 300v28M210 345h36M235 345v15M228 375h20M230 400h18M205 425h50M225 435h30M203 450l60 50 60 35M180 480l25 5 50-5M345 520l30-20 5-20M365 510h30l12-25M300 500l35 10 30-10M315 495l10 35`;
const roadsMid = `M120 38L170 28 265 22 350 18 480 25 570 30M270 128L373 118M347 80L357 93 470 87 570 77M175 210L282 204 480 188 570 180M98 320L188 312 290 304 490 290 570 283M95 415L295 407 500 390 550 385M263 0L268 80 282 204 298 420M365 0L370 75M373 95L382 195 400 420M282 200L348 80 392 0M170 30V100L178 225M230 210L236 290 220 310M188 312L194 420M430 190l8 25M350 225h35v12h-30zM490 248l45-5 3 10M518 288l3 35M548 385l3 18-6 17M270 155h18M285 275l15-5M360 400h25M373 402v18M290 345h45M255 335h35M270 308l-15 28M155 370h35M155 370l5 40M265 0l-90 10M310 5l55 20M330 0l15 25M100 205h35v45h-35M105 210v30M120 210v35M95 300v40l20 0v-40M100 350v70M110 370h15v50M180 140h30v40M215 140l30-5 3 40-30 5M190 160l40 5M190 70l50-20M200 90l50-30M210 105l50-30M230 110h35M180 130h80`;
const roadsLow = `M90 35L295 15 500 3M100 130L303 118M98 233L220 228 305 222M193 0L205 110 218 340M398 0L405 50V120M405 55l30 20 30 20 22 35M405 115l-25 25M380 95h25M405 110h35M295 0L303 60 310 210M302 225L290 250 275 285 215 335 160 425M302 228L350 290 330 335 345 355 360 365 355 395 388 398 390 440 383 462M120 325L218 318M275 283l25-8 20 10 5-20M218 280l20-5 25 18M235 280l15 25M105 440l20-20 25 10M120 430h25l10-15M305 65h35M305 78h20M310 92h25M310 125l32 3 8 30-38 2M310 140h35M220 110l10-15M140 130v50M152 130v25M175 130v15l15-5M120 60v30M105 45h30v20h-30M250 120v30M262 120v15M275 120v30M210 165h20M212 190h15M300 200l25 15M362 10v25M375 10l10 25M435 420l0 30 12 12 28-15 14-22 24-16M570 405l-30 60M525 235l20-8 25 3M500 17h25M550 0v40l12-5M100 250v40h20M110 240v90M125 235v80M100 270h30M100 300h28M130 240l20 15M150 225l-8 30M145 255h15v20h-30M90 350l15-25 20 20-10 15zM120 370l20 5M100 320l-10 30M145 322l-10-25M260 200l15-20 25-5M260 210h25l5-20M275 195l20 5M120 190l25 30M110 205l20 20M155 210l15-30M160 200l40 20M180 185l15 30`;
const roadsNE = `M28 5L47 28 55 120 65 280 62 292 75 320 85 460 103 690M147 5L165 220 185 400 205 690M195 5L225 370 290 490 310 540 350 592 400 617 460 622 520 650 575 690M229 375L295 490 320 535 365 570M247 5L265 220 288 466M290 490L308 690M350 5L370 255M400 50L413 150 425 250 438 445 450 560 458 690M388 460L405 690M557 45L580 300M0 83L150 70 400 50 580 35M0 185L160 172 415 150 580 137M0 290L130 277M235 268L425 250 580 238M0 388L180 373 430 350 580 340M0 490L30 472 65 486 238 470M288 466L438 455 580 442M0 537L90 540M0 594L200 577 400 560M0 690L410 660 580 650M47 28l100-10M55 125l50-3 3 55M65 180h23v20h22M65 205h40v15H65M130 226h35M217 215h50M175 330h30M10 285v-20M128 375v-20M12 390v40M30 390l2 37M85 462h22M148 680v-35M95 565l28 20M180 615h37M205 600l-10 15M250 520l8 70M265 510l15 8h12M300 130v28M297 680l-5-40M348 255v30M353 320v35l10-5M353 330l12 5M340 362l2 18M435 378l10 3h12M500 245v40h22M547 340l3 50-12 5v50M555 450L520 500 500 540M540 445v45M485 470l10 65M470 465l15 30M512 135v-35M535 137v-30h-20M470 145v12M490 143v18M370 165l15 10h30M220 20h15v30M228 5l8 15M215 30h20M312 465v25M358 460v30M300 510v50M320 560v20M450 560h50l-30 25M455 570l45 20M395 480h50M400 500l40 20M440 40l10-20 30 20M545 5l7 25M440 15l35-5 5 20M510 530l25 20 40 15M520 560l5 45M505 580l30 35M490 600l15 40M500 620v30M535 655l35 30M410 640h30M400 650l30 10M485 655v25M505 610l20 25M350 670v15M380 665l5 20M0 50l12-2 2 20-14 2M310 70l20-10 10 25-20 5M330 95l60-10M350 110l50-5M370 50l35 5 5 40M390 70l40 20`;
const roadsSE = `M103 0L120 195 105 215M120 185v25M0 22L205 5 280 0M205 0L212 107M0 122L212 107 220 122 250 125 260 105M235 120l10 20M165 110L185 145 170 155M185 145L205 175 240 205 252 240 240 255 213 280 207 302 165 340 162 380 210 372 240 350 295 290 365 300 403 292 417 258 413 215 375 155 335 105 285 62 310 45 305 0M290 0v40M162 380L130 392 135 435 95 458 60 452 42 462M162 380L190 390 203 455 180 480 163 520 205 560 208 578M180 480l30 15 5 20M200 455l30 15-5 20M203 440l12-3M203 302h15M213 280l-5 20M55 690L80 650 105 627 142 633 137 645 180 610 208 578 250 545 310 500 350 487 370 475 420 425 465 392 500 350 560 318 580 300 540 288 500 280 475 255 440 240M417 258L450 245 477 232 480 215 530 180 537 150 515 115 495 75 475 35 435 20M537 150h30l13-5M480 0l10 10 20 40 10 3M460 0l10 25 15 15M475 78l-15 30-15-10M375 160l-2-15 15-8M385 165l20 10M403 292L395 340 375 355 360 370 370 475M395 340l-25-3-55 20-5 12M325 297l10 30M210 372l30 8M230 350l-5-12M465 392L500 440 560 470 580 478M500 437L580 378M540 470L415 570 380 597 355 605M350 487L335 540 352 580 355 605 350 640 362 677M335 540h-40M335 535h25M250 543L300 580M230 558L240 590 243 645M243 640l30-20-10-15M215 518L308 480M370 475l25 25-5 20M350 487l20 20 3 15M350 487l-25-20M380 465l25 25-15 10M415 570l25 35M470 335l25 20 10 25M505 350l20 20M530 335l15 25M555 315l10 15M520 395l20 20M0 660L30 635M525 630l30-10h25M450 225l3 20M430 240v15M470 255v22M480 235l5 12h20M477 215l-15-35M530 180l-20-10M405 0l5 25M355 0v15M445 95l10 15 30-10M165 600l20-2M150 585l10 15 25 5M355 600l30 15M0 78l55 3 3 10M38 125v32M18 222h50v35h15M20 242h28M0 345l8 12M210 38h30M218 60l35-8M185 105l10 15M545 465l25 10-10 25M310 55l20 15`;

const MapView = () => (
  <svg width="517" height="453" viewBox="236 162 517 453" fill="none" strokeLinejoin="round">
    <defs>
      <clipPath id="dense"><polygon points="438,340 431,343 420,347 417,352 416,365 414,370 417,380 415,388 420,399 458,399 458,371 490,371 488,340" /></clipPath>
      <clipPath id="knot"><polygon points="440,339 455,325 464,311 470,313 486,326 487,339" /></clipPath>
      <clipPath id="north"><polygon points="487,220 500,202 509,193 511,225 488,225" /></clipPath>
    </defs>
    <polygon points={territory} fill="#91522d" stroke="#1d1d1d" />
    <polygon points={sub} fill="#ffff00" />
    <polyline points={coastLow} stroke="#222" />
    <path d="M464 272L482 270M508 185L509 176L541 173" stroke="#161616" strokeWidth="1.1" />
    <path d="M488 340L494 398 498 470 502 498 432 504M542 176L549 257 552 291 557 340M557 340L563 430 567 470M517 259L549 257M492 432L563 427" stroke="#555" strokeWidth="1.2" />
    <g stroke="#bdb298" strokeWidth="3">
      <path transform="translate(400 160) scale(.3333)" d={roadsNW} />
      <path transform="translate(400 330) scale(.3333)" d={roadsMid} />
      <path transform="translate(400 460) scale(.3333)" d={roadsLow} />
      <path transform="translate(560 160) scale(.3333)" d={roadsNE} />
      <path transform="translate(560 385) scale(.3333)" d={roadsSE} />
    </g>
    <g stroke="#b5a98a" strokeWidth=".9">
      <path clipPath="url(#dense)" stroke="#aea37c" d={blocks(412, 338, 80, 64, 3.9, 77)} />
      <path clipPath="url(#knot)" d={blocks(438, 309, 52, 32, 4.3, 12)} />
      <path clipPath="url(#north)" d={blocks(485, 192, 30, 34, 4, 99)} />
      <path stroke="#aea37c" d={blocks(459, 376, 24, 14, 4.2, 5)} />
      <path d={blocks(454, 520, 14, 12, 4, 8)} />
      <path d={blocks(486, 518, 14, 14, 4, 9)} />
      <path d={blocks(435, 540, 9, 38, 4.2, 19)} />
      <path d={blocks(490, 162, 38, 9, 4, 21)} />
      <path d={blocks(645, 163, 24, 14, 4.2, 22)} />
      <path d={blocks(672, 180, 22, 14, 4.2, 23)} />
      <path d={blocks(696, 346, 30, 16, 4.4, 24)} />
      <path stroke="#aea37c" d={blocks(431, 402, 7, 10, 3.5, 30)} />
      <path stroke="#aea37c" d={blocks(433, 474, 8, 16, 3.5, 35)} />
      <path d={blocks(503, 327, 20, 8, 4, 31)} />
    </g>
    {/* grab cursor */}
    <path
      transform="translate(619 283)"
      d="M5.500 20.500L1 11c-1-2 1-3 2.500-1.500L6 12.500 4 4c-.3-2 2.200-2.300 2.700-.5L8.500 10 8.700 2c.1-2 2.800-2 2.900 0l.4 8L14 3c.5-1.800 3-1.300 2.700.6L15.500 11l2-4c.9-1.600 2.900-.7 2.400 1L17.500 15c-.4 2.500-1.500 4-2 5.500z"
      fill="#424242" stroke="#fff" strokeWidth=".8"
    />
  </svg>
);

const menu: [string, string, string, number][] = [
  ["Pro", "j", "ect", 40], ["", "E", "dit", 23], ["", "V", "iew", 28], ["", "L", "ayer", 31], ["", "S", "ettings", 47],
  ["", "P", "lugins", 42], ["Vect", "o", "r", 37], ["", "R", "aster", 37], ["", "D", "atabase", 54], ["", "W", "eb", 26],
  ["", "M", "esh", 31], ["Pro", "c", "essing", 62], ["", "H", "elp", 27],
];

export default function App() {
  return (
    <>
      <Global />
      <Window>
        <TitleBar>
          <Ico size={17}><Q /></Ico>
          <TitleText>*Untitled Project - QGIS</TitleText>
          <WinButtons viewBox="0 0 86 22" fill="none" stroke="#6d777b" strokeWidth="2">
            <path d="M3 13l5-5 5 5z" fill="#6d777b" stroke="none" /><path d="M27 15h10M51 7h8v8h-8zM75 6.5l9 9M84 6.5l-9 9" />
          </WinButtons>
        </TitleBar>
        <MenuBar>
          {menu.map(([a, k, b, w]) => <MenuItem key={a + k + b} $w={w}>{a}<u>{k}</u>{b}</MenuItem>)}
        </MenuBar>
        <ToolRow $h={39}>
          <Grip $w={13} />
          {["file", "open", "save", "layout", "manager", "style"].map(n => <T key={n} n={n} />)}
          <Grip />
          <T n="hand" on /><T n="pan" /><T n="zin" /><T n="zout" /><T n="zfull" /><T n="zsel" /><T n="zlayer" />
          <T n="znative" off /><T n="zlast" /><T n="znext" off /><T n="newmap" /><T n="bookadd" /><T n="bookmarks" /><T n="refresh" />
          <Grip />
          <T n="info" /><T n="action" off /><Drop $off $w={11} />
          <T n="select" /><Drop $w={13} /><T n="form" /><Drop $w={12} /><T n="deselect" />
          <T n="table" /><T n="abacus" /><T n="gear" on /><T n="sigma" /><T n="measure" /><Drop $w={12} />
          <More $w={48}>»</More>
        </ToolRow>
        <ToolRow $h={39}>
          <Grip $w={13} />
          <T n="dsm" /><T n="geopkg" /><T n="shape" /><T n="feather" /><T n="chip" /><Sep /><T n="virtual" />
          <Grip />
          <T n="pens" off /><T n="pen" /><T n="saveedit" off /><T n="addfeat" off /><T n="vertex" off /><Drop $off />
          <T n="editattr" off /><T n="trash" off /><T n="cut" off /><T n="copy" off /><T n="paste" off /><T n="undo" off /><T n="redo" off />
          <Grip />
          <T n="label" /><T n="diagram" /><Sep $w={6} /><T n="pinlab" /><T n="redlab" /><Sep />
          <T n="l1" off /><T n="l2" off /><T n="l3" off /><T n="l4" off /><T n="l5" off />
          <Grip $w={17} /><T n="globe" /><More $w={44}>»</More>
          <Grip $w={0} /><T n="help" /><Grip $w={20} />
        </ToolRow>
        <ToolRow $h={38}>
          <Grip $w={13} />
          {["python", "grid", "sigblob", "diamonds", "blocks", "nulls", "photos", "leaf", "svg"].map(n => <T key={n} n={n} />)}
          <Grip /><T n="qms" /><T n="osm" /><Grip /><T n="share" />
        </ToolRow>

        <Main>
          <LeftDock>
            <DockHead title="Layers" />
            <SmallBar $pad={3}>
              {["brush", "addgroup", "eye", "filter", "expr"].map(n => (
                <SmallBtn key={n} $w={25}><Ico size={15}>{I[n]}</Ico></SmallBtn>
              ))}
              <Drop $w={13} />
              {["expand", "collapse", "remove"].map(n => (
                <SmallBtn key={n} $w={25}><Ico size={15}>{I[n]}</Ico></SmallBtn>
              ))}
            </SmallBar>
            <Tree $h={377}>
              <LayerRow $sel><CheckBox /><LineSym /><span>Street_Network_2019</span><RowEnd /></LayerRow>
              <LayerRow><CheckBox /><FillSym /><span>Suburbs_Territory</span><RowEnd /></LayerRow>
            </Tree>
            <Tabs><Tab $w={63} $active>Layers</Tab><Tab $w={72}>Browser</Tab></Tabs>
          </LeftDock>
          <Splitter $w={6} />
          <Canvas><MapView /></Canvas>
          <Splitter $w={6} />
          <RightDock>
            <DockHead title="Processing Toolbox" />
            <SmallBar $pad={3}>
              <SmallBtn $w={26}><Ico size={16}>{I.gears}</Ico></SmallBtn>
              <SmallBtn $w={26}><Ico size={16}>{I.pysmall}</Ico></SmallBtn>
              <SmallBtn $w={23}><Ico size={16}>{I.clock}</Ico></SmallBtn>
              <SmallBtn $w={25} $on><Ico size={16}>{I.doc}</Ico></SmallBtn>
              <Sep $w={8} />
              <SmallBtn $w={24}><Ico size={16}>{I.note}</Ico></SmallBtn>
              <Sep $w={7} />
              <SmallBtn $w={24}><Ico size={17}>{I.wrench}</Ico></SmallBtn>
            </SmallBar>
            <Search><Glass />Search…</Search>
            <AlgTree>
              <AlgRows>
                <AlgRow><Ico size={16}>{I.clock}</Ico>Recently used</AlgRow>
                <AlgRow><Ico size={16}><Q /></Ico>Cartography</AlgRow>
                <AlgRow><Ico size={16}><Q /></Ico>Database</AlgRow>
              </AlgRows>
              <ScrollBar><ScrollEnd /><ScrollEnd $down /></ScrollBar>
            </AlgTree>
            <Notice>You can add more algorithms to the toolbox, <a>enable<br />additional providers.</a> &nbsp; <a>[close]</a></Notice>
            <HSplit $h={6} />
            <DockHead title="Results Viewer" h={19} />
            <Panel $h={192} />
            <HSplit $h={4} />
            <Panel $h={70} />
          </RightDock>
        </Main>

        <Status>
          <Locator $w={235} $pl={7}><Glass />Type to locate (Ctrl+K)</Locator>
          <Lab $w={57} $ml={29}>Coordinate</Lab>
          <Field $w={104} $pl={8}>274826,6095847</Field>
          <StatIcon $ml={4} width="16" height="16" viewBox="0 0 16 16" fill="none" stroke="#333" strokeWidth="1.2">
            <path d="M1 2l5 5M1 6l4 3M5 1l3 5M1 10l4 1M14 1l-3 3M15 5l-3 2" /><ellipse cx="8" cy="6" rx="3" ry="4.500" fill="#888" transform="rotate(-25 8 6)" /><circle cx="10.500" cy="11.500" r="3.500" fill="#eee" /><path d="M10.500 9.500v2l1.500 1" />
          </StatIcon>
          <Lab $w={27} $ml={12}>Scale</Lab>
          <Field $w={93} $pl={3}>1:130356<Arrows $w={20}><Drop /></Arrows></Field>
          <StatIcon $ml={13} width="13" height="16" viewBox="0 0 13 16" fill="none">
            <path d="M3 8V4.500a3.500 3.500 0 0 1 7 0V8" stroke="#888" strokeWidth="1.6" /><rect x=".5" y="7" width="12" height="8" rx="1.500" fill="#555" />
          </StatIcon>
          <Lab $w={50} $ml={7}>Magnifier</Lab>
          <Field $w={87}>100%<Spin /></Field>
          <Lab $w={50} $ml={8} $wide>Rotation</Lab>
          <Field $w={89}>0.0 °<Spin /></Field>
          <Lab $w={14} $ml={6}><CheckBox /></Lab>
          <Lab $w={53} $ml={5}>Render</Lab>
          <StatIcon $ml={0} width="15" height="15" viewBox="0 0 15 15" fill="#bbb" stroke="#666" strokeWidth=".8">
            <circle cx="7.500" cy="7" r="5.800" /><path d="M7.500 1v12M1.700 7h11.600M2.500 4h10M2.500 10h10M7.500 1c-4 3-4 9 0 12M7.500 1c4 3 4 9 0 12M0 8l7.500 7L15 8" fill="none" />
          </StatIcon>
          <Lab $w={75} $ml={2} $wide>EPSG:7854</Lab>
          <StatIcon $ml={1} width="17" height="17" viewBox="0 0 17 17">
            <path d="M8.500 1c5 0 8 2.500 8 6.200 0 3-1 4.500-3 5.500l1 4-4-3C4 14 .5 11 .5 7.200.5 3.500 4 1 8.500 1z" fill="#555" /><path d="M4 6h2v2H4zM7.500 6h2v2h-2zM11 6h2v2h-2z" fill="#fff" />
          </StatIcon>
        </Status>
      </Window>
    </>
  );
}
